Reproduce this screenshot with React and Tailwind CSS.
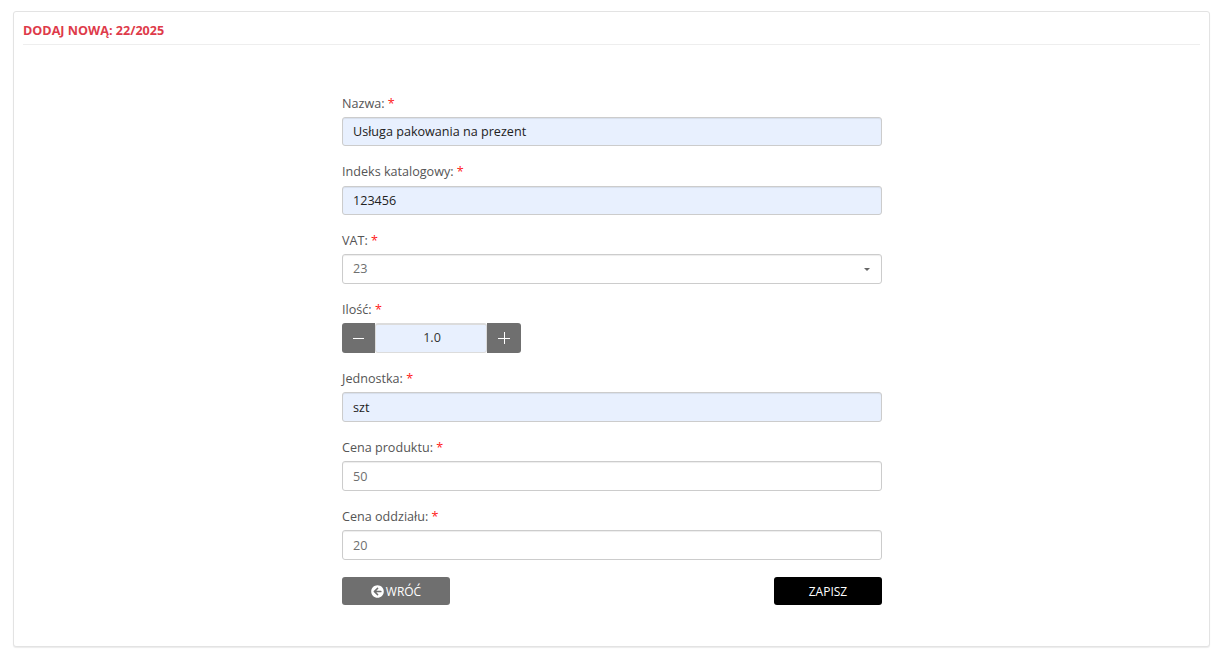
import React from 'react';
import { FaArrowCircleLeft } from 'react-icons/fa';

const fieldClass = 'w-full px-[10px] rounded-[3px] border border-[#cccccc] text-[12.6px] outline-none shadow-[inset_0_1px_1px_rgba(0,0,0,0.075)]';
const filledClass = 'bg-[#e8f0fe] text-[#222222]';
const plainClass = 'bg-white text-[#6f6f6f]';

const Label = ({ children, gap = 'mb-[5px]' }) => (
  <label className={`block h-[17px] ${gap} text-[12.6px] leading-[17px] text-[#555555]`}>
    {children} <span className="text-[#ff1a1a]">*</span>
  </label>
);

const Field = ({ label, value, filled, height = 'h-[30px]', gap }) => (
  <div className="mb-[17px]">
    <Label gap={gap}>{label}</Label>
    <input readOnly value={value} className={`${fieldClass} ${height} ${filled ? filledClass : plainClass}`} />
  </div>
);

const App = () => {
  return (
    <div className="h-[662px] pt-[11px] px-[13px] bg-white font-['Open_Sans',sans-serif]">
      <div className="w-[1197px] h-[636px] px-[9px] rounded-[3px] border border-[#e3e3e3] shadow-[0_1px_1px_rgba(0,0,0,0.08)] bg-white">
        <div className="h-[33px] pt-[10px] border-b border-[#eeeeee] text-[12.6px] leading-[17px] font-bold text-[#de3b4a]">
          DODAJ NOWĄ: 22/2025
        </div>
        <div className="w-[540px] ml-[319px] pt-[50px]">
          <Field label="Nazwa:" value="Usługa pakowania na prezent" filled height="h-[29px]" />
          <Field label="Indeks katalogowy:" value="123456" filled height="h-[29px]" gap="mb-[6px]" />

          <div className="mb-[17px]">
            <Label>VAT:</Label>
            <div className={`${fieldClass} ${plainClass} h-[30px] flex items-center justify-between pr-[11px]`}>
              <span>23</span>
              <span className="w-0 h-0 border-x-[3px] border-x-transparent border-t-[3px] border-t-[#666666]"></span>
            </div>
          </div>

          <div className="mb-[17px]">
            <Label>Ilość:</Label>
            <div className="flex w-[179px] h-[30px]">
              <button className="w-[33px] flex items-center justify-center rounded-l-[3px] bg-[#6f6f6f]">
                <span className="w-[11px] h-px mt-px bg-white"></span>
              </button>
              <div className="flex-1 flex items-center justify-center pl-[2px] rounded-[3px] bg-[#e8f0fe] border border-t-2 border-[#dcdcdc] text-[12.6px] text-[#333333]">
                1.0
              </div>
              <button className="relative w-[34px] flex items-center justify-center rounded-r-[3px] bg-[#6f6f6f]">
                <span className="w-[12px] h-px bg-white"></span>
                <span className="absolute w-px h-[12px] bg-white"></span>
              </button>
            </div>
          </div>

          <Field label="Jednostka:" value="szt" filled />
          <Field label="Cena produktu:" value="50" />
          <Field label="Cena oddziału:" value="20" />

          <div className="flex justify-between">
            <button className="w-[108px] h-[28px] flex items-center justify-center gap-[2px] pt-px rounded-[3px] bg-[#6f6f6f] text-white text-[12px]">
              <FaArrowCircleLeft className="w-[13px] h-[13px] -mt-px" />
              WRÓĆ
            </button>
            <button className="w-[108px] h-[28px] pt-px rounded-[3px] bg-black text-white text-[12px]">
              ZAPISZ
            </button>
          </div>
        </div>
      </div>
    </div>
  );
};

export default App;
